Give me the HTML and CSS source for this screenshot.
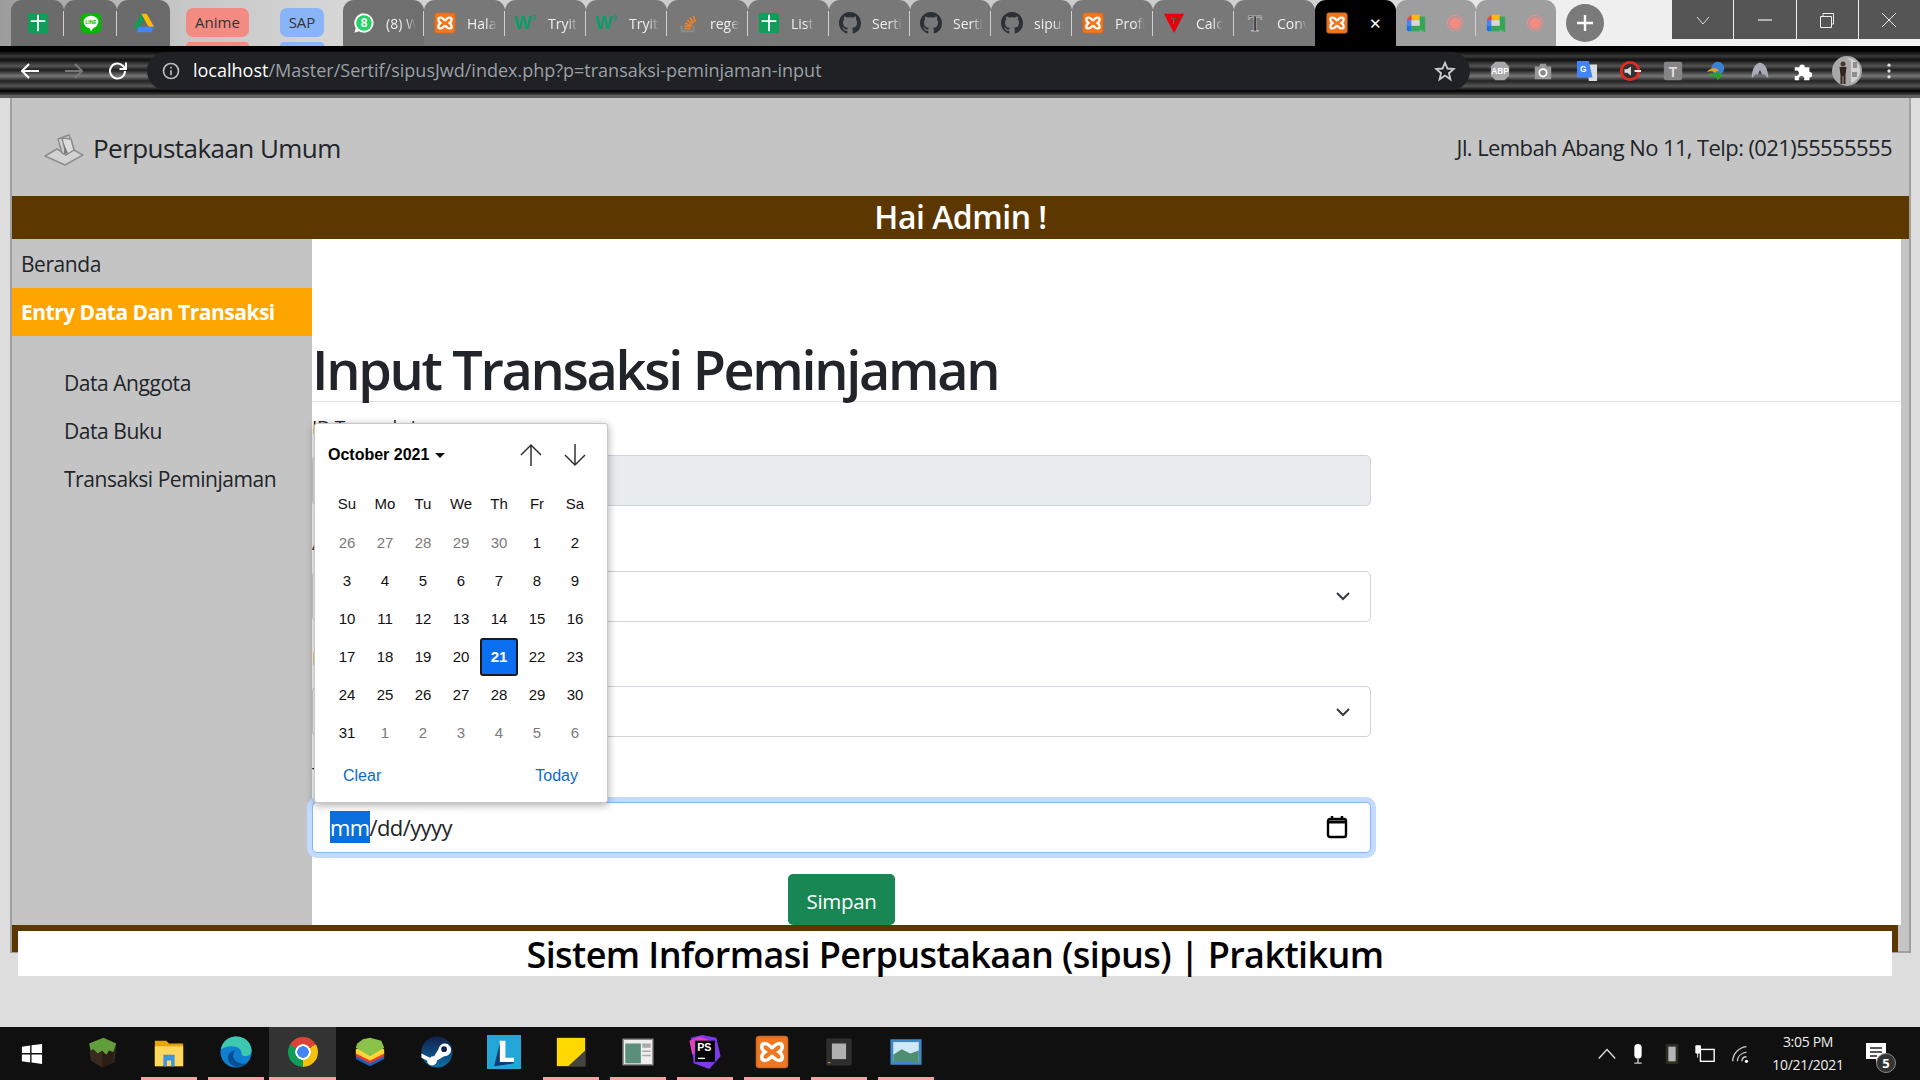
FILE: index.html
```html
<!DOCTYPE html>
<html>
  <head>
    <meta charset="UTF-8" />
    <title>Perpustakaan Umum</title>
    <link rel="stylesheet" href="styles.css">
  </head>
  <body>
    <svg class="sprite" xmlns="http://www.w3.org/2000/svg">
      <symbol id="i-sheet" viewBox="0 0 24 24"><rect x="1" y="1" width="22" height="22" rx="2" fill="#0f9d58"/><path d="M11 3h2v6h7v2h-7v10h-2V11H4V9h7z" fill="#fff"/></symbol>
      <symbol id="i-line" viewBox="0 0 24 24"><rect x="1" y="1" width="22" height="22" rx="5" fill="#00b900"/><ellipse cx="12" cy="11" rx="8" ry="7" fill="#fff"/><path d="M10 17l2 4 3-4z" fill="#fff"/><text x="12" y="13" font-size="5.5" font-weight="700" text-anchor="middle" fill="#00b900" font-family="Liberation Sans">LINE</text></symbol>
      <symbol id="i-drive" viewBox="0 0 24 24"><path d="M9 2h6l8 14h-6z" fill="#fbbc04"/><path d="M9 2l3 6-6.500 12L1 16z" fill="#0f9d58"/><path d="M6 16h17l-3 6H4z" fill="#4285f4"/></symbol>
      <symbol id="i-wa" viewBox="0 0 24 24"><path d="M12 1.500A10.500 10.500 0 0 0 3 17.500L1.500 22.500l5-1.500A10.500 10.500 0 1 0 12 1.500z" fill="#fff"/><circle cx="12" cy="12" r="8.500" fill="#25d366"/><text x="12" y="16.500" font-size="13" font-weight="700" text-anchor="middle" fill="#fff" font-family="Liberation Sans">8</text></symbol>
      <symbol id="i-xampp" viewBox="0 0 24 24"><rect x="1" y="1" width="22" height="22" rx="2" fill="#f0771f" stroke="#c96a2a"/><path d="M7 6c3 0 4 3 5 3s2-3 5-3 3 4 0 6c3 2 3 6 0 6s-4-3-5-3-2 3-5 3-3-4 0-6c-3-2-3-6 0-6z" fill="none" stroke="#fff" stroke-width="2.400"/></symbol>
      <symbol id="i-w3" viewBox="0 0 24 24"><text x="-1" y="19" font-size="20" font-weight="700" fill="#0b9e6a" font-family="Liberation Sans">W</text><text x="18" y="9" font-size="8" font-weight="700" fill="#0b9e6a" font-family="Liberation Sans">3</text></symbol>
      <symbol id="i-so" viewBox="0 0 24 24"><path d="M5 15v6h13v-6" fill="none" stroke="#8c8c8c" stroke-width="2"/><path d="M8 18h7M8 15l7 1M9 12l7 3M11 9l6 4M14 6l4 6M18 4l2 7" stroke="#f48024" stroke-width="1.800" fill="none"/></symbol>
      <symbol id="i-github" viewBox="0 0 16 16"><path fill="#2b3137" d="M8 0C3.580 0 0 3.580 0 8c0 3.540 2.290 6.530 5.470 7.590.4.070.55-.17.55-.38 0-.19-.01-.82-.01-1.490-2.010.37-2.530-.49-2.690-.94-.09-.23-.48-.94-.82-1.130-.28-.15-.68-.52-.01-.53.63-.01 1.080.58 1.230.82.72 1.210 1.870.87 2.330.66.070-.52.28-.87.51-1.070-1.780-.2-3.640-.89-3.640-3.950 0-.87.31-1.590.82-2.150-.08-.2-.36-1.020.08-2.120 0 0 .67-.21 2.200.82.64-.18 1.320-.27 2-.27.68 0 1.360.09 2 .27 1.530-1.040 2.200-.82 2.200-.82.44 1.100.16 1.920.08 2.120.51.56.82 1.270.82 2.150 0 3.070-1.870 3.750-3.650 3.950.29.25.54.73.54 1.480 0 1.070-.01 1.930-.01 2.200 0 .21.15.46.55.38A8.013 8.013 0 0 0 16 8c0-4.420-3.580-8-8-8z"/></symbol>
      <symbol id="i-calc" viewBox="0 0 24 24"><path d="M1 2h22L12 23z" fill="#e8000d"/><text x="12" y="13" font-size="10" font-weight="700" text-anchor="middle" fill="#5c5c5c" font-family="Liberation Sans">T</text></symbol>
      <symbol id="i-serif" viewBox="0 0 24 24"><text x="12" y="21" font-size="25" text-anchor="middle" fill="#111" stroke="#eee" stroke-width=".5" font-family="Liberation Serif">T</text></symbol>
      <symbol id="i-meet" viewBox="0 0 24 24"><path d="M7 3h9v6H7z" fill="#fbbc04"/><path d="M2 8l5-5v6H2z" fill="#ea4335"/><path d="M2 9h5v6H2z" fill="#4285f4"/><path d="M2 15h5v6H4a2 2 0 0 1-2-2z" fill="#1a73e8"/><path d="M7 15h9v6H7z" fill="#34a853"/><path d="M16 5v14l6 3V5z" fill="#34a853"/><path d="M7 9h9v6H7z" fill="#fff" opacity=".6"/></symbol>
      <symbol id="i-rec" viewBox="0 0 24 24"><circle cx="12" cy="12" r="10" fill="none" stroke="#f28b82" stroke-width="1.500"/><circle cx="12" cy="12" r="7.500" fill="#f28b82"/></symbol>
      <symbol id="i-tri" viewBox="0 0 16 16"><path d="M2 5l6 6 6-6" fill="none" stroke="#343a40" stroke-width="2"/></symbol>
    </svg>

    <header class="browser">
      <div class="tabstrip">
        <div class="tab tab-pin"><svg class="fav"><use href="#i-sheet"/></svg></div>
        <div class="tab tab-pin"><svg class="fav"><use href="#i-line"/></svg></div>
        <div class="tab tab-pin tab-end"><svg class="fav"><use href="#i-drive"/></svg></div>
        <div class="group-chip chip-red">Anime</div>
        <div class="group-chip chip-blue">SAP</div>
        <div class="tab tab-wa"><svg class="fav"><use href="#i-wa"/></svg><span class="tab-title">(8) WhatsApp</span></div>
        <div class="tab"><svg class="fav"><use href="#i-xampp"/></svg><span class="tab-title">Halaman</span></div>
        <div class="tab"><svg class="fav"><use href="#i-w3"/></svg><span class="tab-title">Tryit Editor</span></div>
        <div class="tab"><svg class="fav"><use href="#i-w3"/></svg><span class="tab-title">Tryit Editor</span></div>
        <div class="tab"><svg class="fav"><use href="#i-so"/></svg><span class="tab-title">regex</span></div>
        <div class="tab"><svg class="fav"><use href="#i-sheet"/></svg><span class="tab-title">List</span></div>
        <div class="tab"><svg class="fav"><use href="#i-github"/></svg><span class="tab-title">Sertif</span></div>
        <div class="tab"><svg class="fav"><use href="#i-github"/></svg><span class="tab-title">Sertif</span></div>
        <div class="tab"><svg class="fav"><use href="#i-github"/></svg><span class="tab-title">sipus</span></div>
        <div class="tab"><svg class="fav"><use href="#i-xampp"/></svg><span class="tab-title">Profile</span></div>
        <div class="tab"><svg class="fav"><use href="#i-calc"/></svg><span class="tab-title">Calc</span></div>
        <div class="tab tab-end"><svg class="fav"><use href="#i-serif"/></svg><span class="tab-title">Conv</span></div>
        <div class="tab tab-active"><svg class="fav"><use href="#i-xampp"/></svg><span class="tab-close">✕</span></div>
        <div class="tab tab-meet"><svg class="fav"><use href="#i-meet"/></svg><svg class="fav rec"><use href="#i-rec"/></svg></div>
        <div class="tab tab-meet tab-end"><svg class="fav"><use href="#i-meet"/></svg><svg class="fav rec"><use href="#i-rec"/></svg></div>
        <div class="new-tab"><svg viewBox="0 0 24 24"><path d="M12 4v16M4 12h16" stroke="#fff" stroke-width="2.400"/></svg></div>
        <div class="win-controls">
          <div class="win-btn"><svg viewBox="0 0 16 16"><path d="M2 5l6 7 6-7" fill="none" stroke="#ddd"/></svg></div>
          <div class="win-btn"><svg viewBox="0 0 16 16"><path d="M1 8h14" stroke="#eee" stroke-width="1.200"/></svg></div>
          <div class="win-btn"><svg viewBox="0 0 16 16"><path d="M1.500 4.500h11v11h-11zM4 4V1.500h10.500V12H13" fill="none" stroke="#eee"/></svg></div>
          <div class="win-btn"><svg viewBox="0 0 16 16"><path d="M1 1l14 14M15 1L1 15" stroke="#eee"/></svg></div>
        </div>
      </div>
      <div class="toolbar">
        <div class="nav-btn"><svg viewBox="0 0 24 24"><path d="M21 12H4M11 5l-7 7 7 7" fill="none" stroke="#fff" stroke-width="2"/></svg></div>
        <div class="nav-btn"><svg viewBox="0 0 24 24"><path d="M3 12h17M13 5l7 7-7 7" fill="none" stroke="#777" stroke-width="2"/></svg></div>
        <div class="nav-btn"><svg viewBox="0 0 24 24"><path d="M19 12a7.500 7.500 0 1 1-2.200-5.300L19.500 9.500M20 3.500v6.500h-6.500" fill="none" stroke="#fff" stroke-width="2"/></svg></div>
        <div class="omnibox">
          <svg class="omni-info" viewBox="0 0 24 24"><circle cx="12" cy="12" r="9" fill="none" stroke="#bbb" stroke-width="2"/><path d="M12 11v6M12 7v2" stroke="#bbb" stroke-width="2"/></svg>
          <span class="url"><b>localhost</b>/Master/Sertif/sipusJwd/index.php?p=transaksi-peminjaman-input</span>
          <svg class="omni-star" viewBox="0 0 24 24"><path d="M12 3l2.700 6.300 6.800.6-5.200 4.500 1.600 6.700L12 17l-5.900 4.100 1.600-6.700-5.200-4.500 6.800-.6z" fill="none" stroke="#ccc" stroke-width="2"/></svg>
        </div>
        <div class="ext-row">
          <svg class="ext" viewBox="0 0 24 24"><path d="M7 2h10l5 5v10l-5 5H7l-5-5V7z" fill="#a8a8a8"/><text x="12" y="15.500" font-size="9" font-weight="700" text-anchor="middle" fill="#fff" font-family="Liberation Sans">ABP</text></svg>
          <svg class="ext" viewBox="0 0 24 24"><path d="M3 7h5l1-3h6l1 3h5v14H3z" fill="#999"/><circle cx="12" cy="14" r="5" fill="#fff"/><circle cx="12" cy="14" r="3" fill="#888"/></svg>
          <svg class="ext" viewBox="0 0 24 24"><path d="M12 5h11v18H14z" fill="#ddd"/><path d="M1 1h13l4 18H1z" fill="#4285f4"/><text x="8" y="13" font-size="9" font-weight="700" text-anchor="middle" fill="#fff" font-family="Liberation Sans">G</text></svg>
          <svg class="ext" viewBox="0 0 24 24"><circle cx="12" cy="12" r="9.500" fill="#333" stroke="#e8291c" stroke-width="3"/><path d="M6 10h3l4-3v10l-4-3H6z" fill="#ddd"/><path d="M17 11h7v2h-7z" fill="#fff"/></svg>
          <svg class="ext" viewBox="0 0 24 24"><rect x="2" y="2" width="20" height="20" rx="2" fill="#858585"/><text x="12" y="18" font-size="15" font-weight="700" text-anchor="middle" fill="#ddd" font-family="Liberation Sans">T</text></svg>
          <svg class="ext" viewBox="0 0 24 24"><circle cx="14" cy="9" r="7" fill="#3b82d6"/><path d="M2 13c4-5 9-5 13-2l-3 3c-3-2-6-2-10-1z" fill="#e8a317"/><path d="M3 16c3-2 6-2 9-1v-3l8 5-7 5v-3c-3-1-7-1-10-3z" fill="#2ca02c"/></svg>
          <svg class="ext" viewBox="0 0 24 24"><path d="M3 20C3 10 7 3 12 3s9 7 9 17l-5-5-1 2-3-6-3 6-1-2z" fill="#a6adb5"/></svg>
          <svg class="ext" viewBox="0 0 24 24"><path d="M3 8h5a3 3 0 1 1 6 0h5v5a3 3 0 1 1 0 6v3h-6a3 3 0 1 0-5 0H3v-5a3 3 0 1 0 0-5z" fill="#fff"/></svg>
          <svg class="avatar" viewBox="0 0 30 30"><circle cx="15" cy="15" r="15" fill="#a9a9a9"/><path d="M15 2a13 13 0 0 1 13 13 13 13 0 0 1-9 12V5z" fill="#d2d2d2"/><path d="M21 6h4v6h-4zM20 16h5v5h-5z" fill="#8d8d8d"/><circle cx="11" cy="8" r="2.500" fill="#4a362c"/><path d="M7.500 11h7l-1 8v9h-2v-8h-1v8h-2v-9z" fill="#33261f"/></svg>
          <svg class="ext kebab" viewBox="0 0 24 24"><circle cx="12" cy="5" r="2" fill="#ddd"/><circle cx="12" cy="12" r="2" fill="#ddd"/><circle cx="12" cy="19" r="2" fill="#ddd"/></svg>
        </div>
      </div>
    </header>

    <div class="viewport">
      <div class="site">
        <div class="site-head">
          <div class="brand">
            <svg class="brand-logo" viewBox="0 0 40 32"><path d="M1 22l12-7 7 4 8-4 11 6-18 10z" fill="#d2d2d2" stroke="#8f8f8f" stroke-width="1.600"/><path d="M14 5l11-4 5 14-8 6-4-2z" fill="#cfcfcf" stroke="#8a8a8a" stroke-width="1.400"/><path d="M18 4l9 1 3 11-8 5z" fill="#dcdcdc" stroke="#8a8a8a" stroke-width="1.400"/><path d="M20 10l4 9-4 1z" fill="#7d7d7d"/></svg>
            <span>Perpustakaan Umum</span>
          </div>
          <div class="address">Jl. Lembah Abang No 11, Telp: (021)55555555</div>
        </div>
        <div class="greeting">Hai Admin !</div>
        <div class="site-body">
          <nav class="side">
            <a class="side-link">Beranda</a>
            <a class="side-link side-active">Entry Data Dan Transaksi</a>
            <ul class="side-sub">
              <li>Data Anggota</li>
              <li>Data Buku</li>
              <li>Transaksi Peminjaman</li>
            </ul>
          </nav>
          <main class="content">
            <h1>Input Transaksi Peminjaman</h1>
            <form class="form">
              <div class="field">
                <label>ID Transaksi</label>
                <div class="control control-off"></div>
              </div>
              <div class="field">
                <label>Anggota</label>
                <div class="control"><svg class="chevron"><use href="#i-tri"/></svg></div>
              </div>
              <div class="field">
                <label>Buku</label>
                <div class="control"><svg class="chevron"><use href="#i-tri"/></svg></div>
              </div>
              <div class="field">
                <label>Tanggal</label>
                <div class="control control-focus">
                  <span class="date-text"><span class="date-sel">mm</span>/dd/yyyy</span>
                  <svg class="cal-icon" viewBox="0 0 24 24"><path d="M7 1v4M17 1v4" stroke="#000" stroke-width="2.400"/><rect x="3" y="4" width="18" height="18" rx="2" fill="none" stroke="#000" stroke-width="2.400"/><path d="M3 7h18" stroke="#000" stroke-width="3"/></svg>
                </div>
              </div>
              <div class="actions"><button type="button" class="btn-save">Simpan</button></div>
            </form>

            <div class="picker">
              <div class="picker-head">
                <span class="picker-month">October 2021</span>
                <span class="picker-caret"></span>
                <div class="picker-arrows">
                  <svg viewBox="0 0 24 24"><path d="M12 23V2M2 12L12 2l10 10" fill="none" stroke="#333" stroke-width="1.500"/></svg>
                  <svg viewBox="0 0 24 24"><path d="M12 1v21M2 12l10 10 10-10" fill="none" stroke="#333" stroke-width="1.500"/></svg>
                </div>
              </div>
              <div class="picker-week">
                <span>Su</span><span>Mo</span><span>Tu</span><span>We</span><span>Th</span><span>Fr</span><span>Sa</span>
              </div>
              <div class="picker-days">
                <span class="muted">26</span><span class="muted">27</span><span class="muted">28</span><span class="muted">29</span><span class="muted">30</span><span>1</span><span>2</span>
                <span>3</span><span>4</span><span>5</span><span>6</span><span>7</span><span>8</span><span>9</span>
                <span>10</span><span>11</span><span>12</span><span>13</span><span>14</span><span>15</span><span>16</span>
                <span>17</span><span>18</span><span>19</span><span>20</span><span class="today">21</span><span>22</span><span>23</span>
                <span>24</span><span>25</span><span>26</span><span>27</span><span>28</span><span>29</span><span>30</span>
                <span>31</span><span class="muted">1</span><span class="muted">2</span><span class="muted">3</span><span class="muted">4</span><span class="muted">5</span><span class="muted">6</span>
              </div>
              <div class="picker-foot"><a>Clear</a><a>Today</a></div>
            </div>
          </main>
        </div>
        <div class="site-foot">
          <div class="site-foot-inner">Sistem Informasi Perpustakaan (sipus) | Praktikum</div>
        </div>
      </div>
    </div>

    <footer class="taskbar">
      <div class="start"><svg viewBox="0 0 24 24"><path d="M1 4l9-1.300V11H1zM11.500 2.500L23 1v10H11.500zM1 12.500h9v8.800L1 20zM11.500 12.500H23V23l-11.500-1.600z" fill="#fff"/></svg></div>
      <div class="task"><svg viewBox="0 0 24 24"><path d="M3 6l10-4 9 4-1 13-9 4-8-5z" fill="#3a2a1e"/><path d="M12 11l9-5-1 13-8 4z" fill="#2a1e16"/><path d="M3 6l10-4 9 4-2 6-3-1-2 3-3-3-3 2-3-3-2 1z" fill="#5f9e3a"/></svg></div>
      <div class="task task-open"><svg viewBox="0 0 24 24"><path d="M2 4h8l2 2h10v16H2z" fill="#e5a50a"/><path d="M2 8h20v14H2z" fill="#ffd75e"/><path d="M8 14h8v8h-2.500v-4h-3v4H8z" fill="#3a96dd"/></svg></div>
      <div class="task task-open"><svg viewBox="0 0 24 24"><circle cx="12" cy="12" r="11" fill="#0f7fd0"/><path d="M1.500 10C3 2 10 1 12 1c7 0 11 5 11 10 0 4-5 5-7 3 1-6-8-8-14.500-4z" fill="#3fc8b0"/><path d="M10 15c1 4 5 6 10 5-3 3-10 4-13-1-2-4 1-8 4-8 0 1-1 2-1 4z" fill="#0a4f94"/></svg></div>
      <div class="task task-open task-on"><div class="chrome-logo"></div></div>
      <div class="task"><svg viewBox="0 0 24 24"><path d="M12 11l10 3v3l-10 5-10-5v-3z" fill="#1565c0"/><path d="M12 8l10 4v3l-10 5-10-5v-3z" fill="#e53935"/><path d="M12 6l10 4v3l-10 5-10-5v-3z" fill="#fdd835"/><path d="M7 3l5-1 8 2 2 5-10 6-10-6 1-3z" fill="#8bc34a"/></svg></div>
      <div class="task"><svg viewBox="0 0 24 24"><defs><linearGradient id="steam-bg" x1="0" y1="0" x2="0" y2="1"><stop offset="0" stop-color="#13204a"/><stop offset="1" stop-color="#0b6fa8"/></linearGradient></defs><circle cx="12" cy="12" r="11" fill="url(#steam-bg)"/><path d="M1 13l6 3a3.500 3.500 0 0 1 3-1l3-5a4.500 4.500 0 1 1 4 5l-5 3a3.500 3.500 0 0 1-7 0l-4-2z" fill="#fff"/><circle cx="17" cy="10" r="2" fill="#13204a"/></svg></div>
      <div class="task"><svg viewBox="0 0 24 24"><rect x="0" y="0" width="24" height="24" fill="#22a7d8"/><path d="M9 4h4v12h6v3H9z" fill="#fff"/><path d="M9 6L5 22l14-2v-1H9z" fill="#0c3c78"/></svg></div>
      <div class="task task-open"><svg viewBox="0 0 24 24"><path d="M2 2h20v20H2z" fill="#ffd800"/><path d="M22 11v11H10z" fill="#444"/></svg></div>
      <div class="task task-open"><svg viewBox="0 0 24 24"><rect x="1.500" y="3" width="21" height="18" fill="#eee" stroke="#8a8a8a"/><path d="M3 6h11v14H3z" fill="#5a8f7b"/><path d="M15 6h6v3h-6zM15 11h6v1h-6zM15 14h6v1h-6z" fill="#aaa"/></svg></div>
      <div class="task task-open"><svg viewBox="0 0 24 24"><path d="M2 2l8-2 10 2 3 13-8 9-11-4z" fill="#7c3aed"/><path d="M1 4l7-3 8 3-6 4-7 6z" fill="#e040c0"/><rect x="5" y="4" width="14" height="15" fill="#000"/><text x="6.500" y="11.500" font-size="7.500" font-weight="700" fill="#fff" font-family="Liberation Sans">PS</text><path d="M7 16h5v1H7z" fill="#fff"/></svg></div>
      <div class="task task-open"><svg><use href="#i-xampp"/></svg></div>
      <div class="task task-open"><svg viewBox="0 0 24 24"><rect x="3" y="2.500" width="18" height="19" rx="1" fill="#2e2e2e"/><rect x="7" y="6" width="10" height="11" fill="#b0b0b0"/><path d="M4 19h2v1H4z" fill="#a08820"/></svg></div>
      <div class="task task-open"><svg viewBox="0 0 24 24"><rect x="1" y="3" width="22" height="18" fill="#3f88c5"/><rect x="3" y="5" width="18" height="14" fill="#cfe8f5"/><path d="M3 14l6-4 6 3 6-2v8H3z" fill="#4f8f6f"/></svg></div>
      <div class="tray">
        <svg class="tray-icon" viewBox="0 0 24 24"><path d="M3 17l9-10 9 10" fill="none" stroke="#ddd" stroke-width="1.500"/></svg>
        <svg class="tray-icon tray-mic" viewBox="0 0 24 24"><rect x="8" y="1" width="8" height="16" rx="4" fill="#fff"/><path d="M12 17v5M8 22h8" stroke="#ccc" stroke-width="1.500"/></svg>
        <svg class="tray-icon" viewBox="0 0 24 24"><rect x="5" y="1" width="14" height="22" fill="#2c2c20"/><rect x="8" y="4" width="8" height="16" fill="#b5b5b5"/></svg>
        <svg class="tray-icon" viewBox="0 0 24 24"><rect x="7" y="7" width="15" height="13" fill="none" stroke="#fff" stroke-width="1.500"/><path d="M2 3h5v8H2zM4 11v5" fill="#fff" stroke="#fff"/></svg>
        <svg class="tray-icon tray-wifi" viewBox="0 0 24 24"><path d="M3 20C3 12 9 5 18 4M8 20c0-5 4-9 10-10M13 20c0-3 2-5 5-5" fill="none" stroke="#ccc" stroke-width="1.500"/><circle cx="18" cy="20" r="1.800" fill="#fff"/></svg>
        <div class="clock"><span>3:05 PM</span><span>10/21/2021</span></div>
        <div class="notif">
          <svg viewBox="0 0 24 24"><path d="M2 2h20v16h-5l-5 5v-5H2z" fill="#fff"/><path d="M6 7h12M6 11h12M6 15h7" stroke="#222" stroke-width="1.400"/></svg>
          <span class="notif-count">5</span>
        </div>
      </div>
    </footer>
  </body>
</html>
```

FILE: styles.css
```css
* {
  box-sizing: border-box;
}
html,
body {
  margin: 0;
  height: 100%;
}
body {
  width: 1920px;
  height: 1080px;
  overflow: hidden;
  display: flex;
  flex-direction: column;
  background: #dddddd;
  color: #212529;
  font-family: "Open Sans", "Noto Sans", sans-serif;
}
.sprite {
  display: none;
}

/* browser frame */
.browser {
  height: 95px;
  flex: none;
}
.tabstrip {
  height: 46px;
  display: flex;
  padding-left: 11px;
  background: linear-gradient(90deg, #9c9c9c 0, #c6c6c6 180px, #d6d6d6 340px, #c8c8c8 800px, #d0d0d0 1300px, #efefef 1560px, #f2f2f2 100%);
}
.tab {
  width: 81px;
  flex: none;
  display: flex;
  align-items: center;
  gap: 11px;
  padding: 0 8px 0 10px;
  border-radius: 11px 11px 0 0;
  background: #787878;
  position: relative;
  overflow: hidden;
}
.tab::after {
  content: "";
  position: absolute;
  right: 0;
  top: 11px;
  bottom: 10px;
  width: 1px;
  background: #d0d0d0;
}
.tab-pin {
  width: 53px;
  justify-content: center;
  padding: 0;
  background: #6b6b6b;
}
.tab-end::after,
.tab-active::after {
  display: none;
}
.tab-wa {
  background: #6f6f6f;
}
.tab-active {
  width: 81px;
  background: #000;
  justify-content: space-between;
  padding-right: 14px;
  padding-left: 11px;
}
.tab-meet {
  width: 80px;
  gap: 19px;
  background: #9e9e9e;
  padding-left: 9px;
}
.fav {
  width: 22px;
  height: 24px;
  flex: none;
}
.rec {
  width: 18px;
  height: 18px;
}
.tab-title {
  font-size: 14px;
  color: #eeeeee;
  white-space: nowrap;
  overflow: hidden;
  -webkit-mask-image: linear-gradient(90deg, #000 65%, transparent);
  mask-image: linear-gradient(90deg, #000 65%, transparent);
}
.tab-close {
  color: #fff;
  font-size: 15px;
}
.group-chip {
  height: 46px;
  padding: 8px 0 0;
  margin-left: 16px;
  text-align: center;
  font-size: 15px;
  line-height: 29px;
  color: #333;
  position: relative;
  isolation: isolate;
}
.group-chip::before {
  content: "";
  position: absolute;
  left: 0;
  right: 0;
  top: 8px;
  height: 29px;
  border-radius: 7px;
  z-index: -1;
}
.group-chip::after {
  content: "";
  position: absolute;
  left: 0;
  right: 0;
  top: 42px;
  height: 4px;
  border-radius: 5px 5px 0 0;
}
.chip-red {
  width: 63px;
}
.chip-blue {
  width: 44px;
  margin-left: 31px;
  margin-right: 19px;
}
.chip-red::before,
.chip-red::after {
  background: #f28b82;
}
.chip-blue::before,
.chip-blue::after {
  background: #8ab4f8;
}
.new-tab {
  width: 38px;
  height: 38px;
  margin: 4px 0 0 10px;
  border-radius: 50%;
  background: #7a7a7a;
  padding: 7px;
}
.win-controls {
  margin-left: auto;
  display: flex;
  height: 39px;
  width: 248px;
}
.win-btn {
  flex: 1;
  background: #555555;
  border-left: 1px solid #eee;
  display: flex;
  align-items: center;
  justify-content: center;
}
.win-btn:first-child {
  border-left: 0;
}
.win-btn svg {
  width: 16px;
  height: 16px;
}
.toolbar {
  height: 49px;
  display: flex;
  align-items: center;
  background: linear-gradient(180deg, #000 0, #000 5px, #3a3a3a 10px, #111 14px, #555 20px, #1d1d1d 24px, #777 30px, #222 35px, #555 40px, #000 45px, #444 49px);
}
.nav-btn {
  width: 44px;
  height: 38px;
  flex: none;
  display: flex;
  align-items: center;
  justify-content: center;
}
.nav-btn:first-child {
  margin-left: 8px;
}
.nav-btn svg {
  width: 24px;
  height: 24px;
}
.omnibox {
  width: 1323px;
  height: 38px;
  margin-left: 7px;
  flex: none;
  display: flex;
  align-items: center;
  border-radius: 19px;
  background: #202124;
  padding-left: 14px;
  padding-right: 14px;
}
.omni-info {
  width: 20px;
  height: 20px;
}
.omni-star {
  width: 22px;
  height: 22px;
  margin-left: auto;
}
.url {
  margin-left: 12px;
  margin-bottom: 2px;
  font-size: 18px;
  color: #9aa0a6;
  white-space: nowrap;
}
.url b {
  font-weight: 400;
  color: #fff;
}
.ext-row {
  display: flex;
  align-items: center;
  gap: 21.3px;
  margin-left: 19px;
}
.ext {
  width: 22px;
  height: 24px;
  flex: none;
}
.avatar {
  width: 30px;
  height: 30px;
  margin-left: -3px;
  flex: none;
}
.kebab {
  margin-left: -5px;
  width: 20px;
}

/* the page in the browser */
.viewport {
  flex: 1;
  padding: 3px 9px 0 10px;
  background: linear-gradient(#5f5f5f 0 3px, #dddddd 3px);
}
.site {
  height: 855px;
  border: 2px solid #a0a0a0;
  border-top: 0;
  background: #c4c4c4;
}
.site-head {
  height: 98px;
  display: flex;
  align-items: center;
  justify-content: space-between;
  padding: 0 17px 0 32px;
}
.brand {
  display: flex;
  align-items: center;
  gap: 9px;
  font-size: 26px;
  letter-spacing: -0.55px;
  line-height: 36px;
  padding-top: 2px;
}
.brand-logo {
  width: 40px;
  height: 32px;
  margin-top: 4px;
}
.address {
  font-size: 22px;
  letter-spacing: -0.6px;
}
.greeting {
  height: 43px;
  background: #5c3700;
  color: #fff;
  font-size: 32px;
  font-weight: 600;
  line-height: 42px;
  text-align: center;
  letter-spacing: -0.5px;
}
.site-body {
  height: 686px;
  display: flex;
  padding-right: 8px;
}
.side {
  width: 300px;
  flex: none;
  font-size: 21px;
  letter-spacing: -0.45px;
  color: #212529;
}
.side-link {
  display: block;
  padding-left: 9px;
  height: 49px;
  line-height: 50px;
}
.side-active {
  height: 48px;
  background: #ffa500;
  color: #fff;
  font-weight: 700;
  letter-spacing: -0.5px;
  line-height: 48px;
}
.side-sub {
  list-style: none;
  margin: 0;
  padding: 24px 0 0 52px;
}
.side-sub li {
  height: 48px;
  line-height: 46px;
}
.content {
  flex: 1;
  position: relative;
  background: #fff;
}
h1 {
  margin: 0;
  height: 163px;
  padding-top: 98px;
  border-bottom: 1px solid #dee2e6;
  font-size: 54px;
  font-weight: 600;
  line-height: 64px;
  letter-spacing: -2.3px;
  color: #212529;
  white-space: nowrap;
}
.form {
  width: 1059px;
  padding-top: 21px;
}
.field {
  margin-bottom: 32.5px;
}
.field label {
  display: block;
  height: 24px;
  margin-top: -8px;
  margin-bottom: 16px;
  line-height: 24px;
  font-size: 19px;
  letter-spacing: -0.4px;
}
.control {
  height: 51px;
  border: 1px solid #ced4da;
  border-radius: 5px;
  display: flex;
  align-items: center;
  justify-content: flex-end;
  background: #fff;
}
.control-off {
  background: #e9ecef;
}
.control-focus {
  justify-content: space-between;
  border-color: #86b7fe;
  box-shadow: 0 0 0 5px #c2dbfe;
  padding: 0 17px;
}
.chevron {
  width: 16px;
  height: 16px;
  margin-right: 19px;
}
.date-text {
  font-size: 22px;
  letter-spacing: -0.6px;
}
.date-sel {
  background: #0a6fdc;
  color: #fff;
  display: inline-block;
  line-height: 32px;
}
.cal-icon {
  width: 24px;
  height: 24px;
  margin-right: 4px;
}
.actions {
  margin-top: -11px;
  text-align: center;
}
.btn-save {
  width: 107px;
  height: 51px;
  padding-top: 3px;
  border: 0;
  border-radius: 5px;
  background: #198754;
  color: #fff;
  font-family: inherit;
  font-size: 20.5px;
  letter-spacing: -0.3px;
}

/* date picker popup */
.picker {
  position: absolute;
  left: 2px;
  top: 184px;
  width: 294px;
  height: 380px;
  padding: 12px 14px 0 13px;
  border: 1px solid #c8c8c8;
  border-radius: 3px;
  background: #fff;
  box-shadow: 0 2px 8px rgba(0, 0, 0, 0.35);
  font-family: "Liberation Sans", Arial, sans-serif;
  font-size: 15px;
  color: #111;
}
.picker-head {
  height: 38px;
  display: flex;
  align-items: center;
}
.picker-month {
  font-size: 16px;
  font-weight: 700;
  color: #000;
}
.picker-caret {
  width: 0;
  height: 0;
  margin-left: 6px;
  border: 5px solid transparent;
  border-top: 5px solid #111;
  border-bottom: 0;
}
.picker-arrows {
  margin-left: auto;
  display: flex;
  gap: 20px;
  margin-right: 6px;
}
.picker-arrows svg {
  width: 24px;
  height: 24px;
}
.picker-week {
  margin-top: 10px;
  margin-bottom: 2px;
  height: 38px;
  display: grid;
  grid-template-columns: repeat(7, 38px);
  align-items: center;
  text-align: center;
}
.picker-days {
  display: grid;
  grid-template-columns: repeat(7, 38px);
  grid-auto-rows: 38px;
  text-align: center;
  line-height: 38px;
}
.muted {
  color: #7a7a7a;
}
.today {
  background: #0a6ff0;
  border: 2px solid #1a1a1a;
  border-radius: 3px;
  color: #fff;
  font-weight: 700;
  line-height: 34px;
}
.picker-foot {
  height: 38px;
  margin-top: 5px;
  display: flex;
  justify-content: space-between;
  align-items: center;
  padding: 0 15px;
  font-size: 16px;
  color: #0b6bcb;
}

/* footer sits over the bottom edge of the frame */
.site-foot {
  height: 27px;
  margin-right: 11px;
  border: 6px solid #5c3700;
  border-bottom: 0;
}
.site-foot-inner {
  height: 45px;
  background: #fff;
  color: #000;
  font-size: 36px;
  font-weight: 600;
  line-height: 48px;
  text-align: center;
  letter-spacing: -0.6px;
  white-space: nowrap;
}

/* windows taskbar */
.taskbar {
  height: 53px;
  flex: none;
  display: flex;
  background: #101010;
}
.start {
  width: 68px;
  padding: 16px 21px 14px 21px;
}
.start svg {
  width: 22px;
  height: 22px;
  display: block;
}
.task {
  width: 67px;
  height: 53px;
  display: flex;
  align-items: center;
  justify-content: center;
  position: relative;
  padding-bottom: 3px;
}
.task svg {
  width: 34px;
  height: 34px;
}
.task-open::after {
  content: "";
  position: absolute;
  left: 6px;
  right: 5px;
  bottom: 0;
  height: 3px;
  background: #f9a0a5;
}
.task-on {
  background: #333;
}
.task-on::after {
  left: 0;
  right: 0;
}
.chrome-logo {
  width: 30px;
  height: 30px;
  border-radius: 50%;
  background:
    radial-gradient(circle, #4285f4 0 5.500px, #fff 6px 7.500px, transparent 8px),
    conic-gradient(from -60deg, #db4437 0 33.300%, #f4c20d 33.300% 66.600%, #0f9d58 66.600%);
}
.tray {
  margin-left: auto;
  display: flex;
  align-items: center;
  padding-right: 30px;
}
.tray-icon {
  width: 22px;
  height: 22px;
  margin-left: 11.5px;
}
.tray-mic {
  margin-left: 9px;
}
.tray-wifi {
  margin-left: 14px;
}
.clock {
  width: 100px;
  margin-left: 6px;
  display: flex;
  flex-direction: column;
  align-items: center;
  gap: 5px;
  font-size: 14px;
  line-height: 18px;
  letter-spacing: -0.3px;
  color: #eee;
}
.notif {
  margin-left: 6px;
  position: relative;
  width: 26px;
  height: 26px;
}
.notif svg {
  width: 24px;
  height: 24px;
}
.notif-count {
  position: absolute;
  right: -6px;
  bottom: -6px;
  width: 20px;
  height: 20px;
  border-radius: 50%;
  background: #333;
  border: 1px solid #888;
  color: #fff;
  font-size: 13px;
  font-weight: 700;
  line-height: 18px;
  text-align: center;
}
```
